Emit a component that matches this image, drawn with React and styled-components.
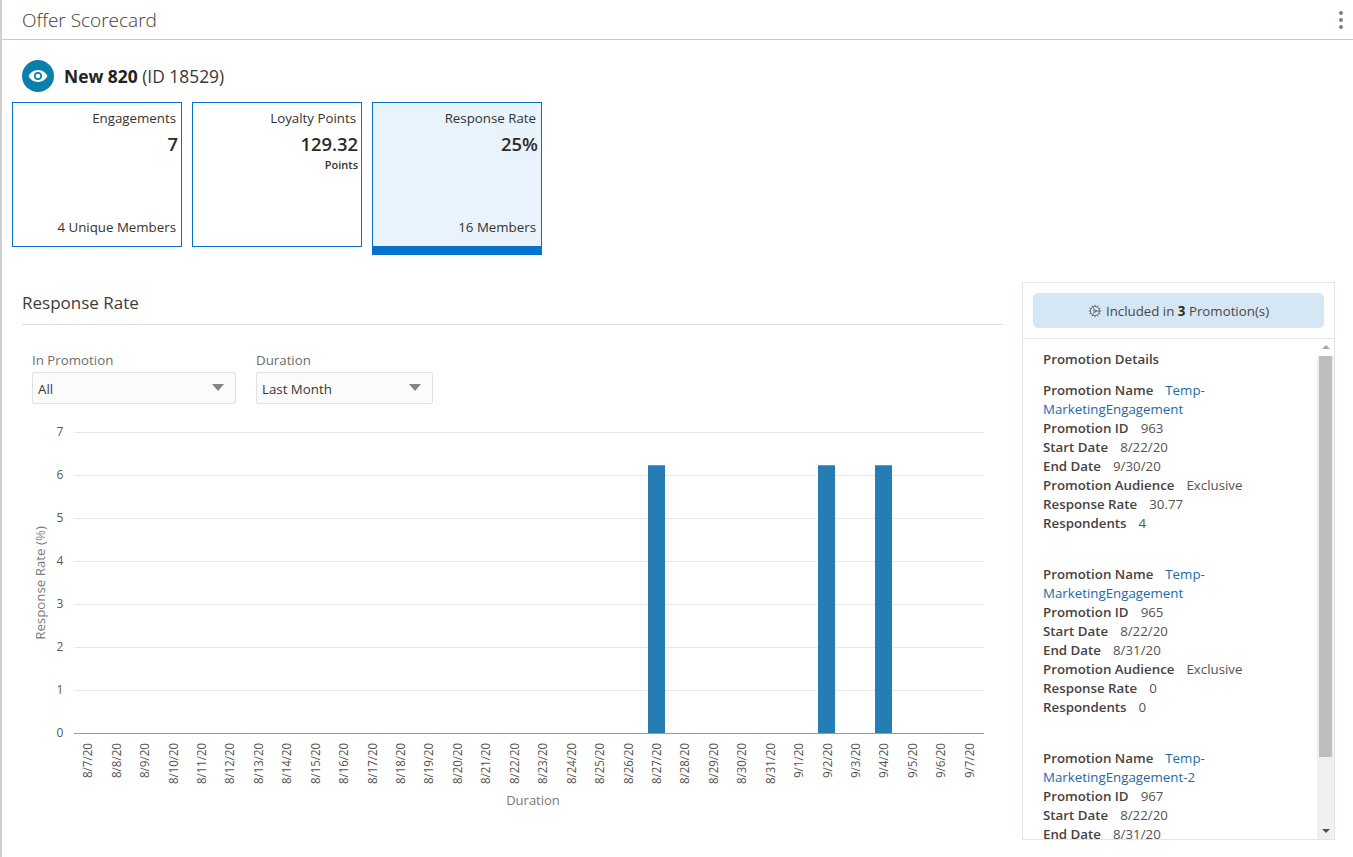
import React from "react";
import styled, { createGlobalStyle } from "styled-components";
import { Cog } from "lucide-react";

const Global = createGlobalStyle`
  html, body { margin: 0; padding: 0; background: #fff; }
  body { font-family: "Open Sans", "Noto Sans", "Liberation Sans", sans-serif; color: #2c2a28; overflow: hidden; }
  * { box-sizing: border-box; }
`;

const Page = styled.div`
  width: 1353px; height: 857px; border-left: 2px solid #cfcfcf; background: #fff; overflow: hidden;
`;
const Header = styled.header`
  height: 40px; border-bottom: 1px solid #c9c9c9; display: flex; align-items: center; justify-content: space-between;
  padding: 0 10px 0 20px;
`;
const Title = styled.h1`
  margin: 0; font-size: 19px; font-weight: 300; color: #3f3b38; line-height: 40px;
`;
const Kebab = styled.div`
  display: flex; flex-direction: column; gap: 3px;
`;
const Dot = styled.span`
  width: 4px; height: 4px; border-radius: 50%; background: #7b8087;
`;
const Identity = styled.div`
  display: flex; align-items: center; gap: 10px; padding: 10px 0 0 20px; height: 62px;
`;
const EyeBadge = styled.div`
  width: 32px; height: 32px; border-radius: 50%; background: #0a7fac; display: flex; align-items: center; justify-content: center;
`;
const Name = styled.div`
  font-size: 17.4px; color: #3a3735; font-weight: 400; b { font-weight: 700; color: #252321; }
`;
const Cards = styled.div`
  display: flex; gap: 10px; padding-left: 10px; height: 153px; align-items: flex-start;
`;
const Card = styled.div`
  width: 170px; height: ${p => (p.$active ? 153 : 145)}px; display: flex; flex-direction: column; align-items: flex-end;
  border: 1px solid #0572ce; border-bottom: ${p => (p.$active ? "9px solid #0572ce" : "1px solid #0572ce")};
  background: ${p => (p.$active ? "#e8f3fb" : "#fff")}; padding: 6px 5px 9px 5px;
`;
const CardLabel = styled.div`
  font-size: 13.3px; line-height: 19px; color: #35322f;
`;
const CardValue = styled.div`
  font-size: 18.4px; line-height: 26px; font-weight: 600; color: #2c2a28; margin-right: -2px; margin-top: 3px;
`;
const CardUnit = styled.div`
  font-size: 11px; line-height: 14px; font-weight: 600; color: #35322f; margin-right: -2px; margin-top: 1px;
`;
const CardFoot = styled.div`
  margin-top: auto; font-size: 13.3px; line-height: 19px; color: #35322f;
`;
const Body = styled.div`
  display: flex; align-items: flex-start; padding-left: 20px; margin-top: 27px;
`;
const Main = styled.section`
  width: 981px; padding-top: 8px;
`;
const SectionTitle = styled.h2`
  margin: 0; font-size: 17px; font-weight: 400; color: #3f3b38; height: 35px; line-height: 26px; border-bottom: 1px solid #dfdfdf;
`;
const Filters = styled.div`
  display: flex; gap: 20px; padding: 25px 0 0 10px;
`;
const Field = styled.div`
  width: ${p => p.$w}px;
`;
const FieldLabel = styled.div`
  font-size: 13.3px; line-height: 20px; color: #6f6c69; height: 22px;
`;
const Select = styled.div`
  height: 32px; border: 1px solid #e2e2e2; border-radius: 2px; background: #fbfbfb; display: flex; align-items: center;
  justify-content: space-between; padding: 2px 11px 0 5px; font-size: 13.3px; color: #3a3735;
`;
const Caret = styled.span`
  width: 0; height: 0; border-left: 6px solid transparent; border-right: 6px solid transparent; border-top: 7px solid #87837f;
  margin-top: -4px;
`;
const ChartSvg = styled.svg`
  display: block; margin-left: -22px; margin-top: 12px;
  text { font-family: "Open Sans", "Noto Sans", sans-serif; }
`;
const Side = styled.aside`
  width: 313px; height: 558px; margin-left: 19px; border: 1px solid #e1e4e8; display: flex; flex-direction: column; background: #fff;
`;
const SideHead = styled.div`
  height: 56px; flex: none; padding: 10px 10px 0; border-bottom: 1px solid #dfe5ea;
`;
const Pill = styled.div`
  height: 35px; border-radius: 5px; background: #d5e7f4; display: flex; align-items: center; justify-content: center; gap: 4px;
  font-size: 13.3px; color: #4a4744; b { font-weight: 700; color: #2c2a28; }
`;
const SideBody = styled.div`
  flex: 1; display: flex; min-height: 0;
`;
const Scroller = styled.div`
  flex: 1; overflow: hidden; padding: 11px 20px 0 20px; font-size: 13.3px; line-height: 19px;
`;
const DetailsTitle = styled.div`
  font-weight: 600; color: #45423f; margin-bottom: 12px;
`;
const Promo = styled.div`
  margin-bottom: 32px;
`;
const Key = styled.span`
  font-weight: 600; color: #45423f; margin-right: 12px;
`;
const Val = styled.span`
  color: #55524f;
`;
const PromoLink = styled.span`
  color: #1d6aa8;
`;
const Track = styled.div`
  width: 17px; flex: none; background: #f0f0f0; display: flex; flex-direction: column; align-items: center; position: relative;
  &::before { content: ""; position: absolute; left: 0; right: 0; top: 0; height: 17px; background: #fff; }
`;
const ArrowUp = styled.span`
  position: relative; margin-top: 6px; width: 0; height: 0; border-left: 4px solid transparent; border-right: 4px solid transparent; border-bottom: 4px solid #a8a8a8;
`;
const ArrowDown = styled.span`
  margin-top: auto; margin-bottom: 6px; width: 0; height: 0; border-left: 4px solid transparent; border-right: 4px solid transparent; border-top: 4px solid #505050;
`;
const Thumb = styled.div`
  width: 13px; height: 401px; background: #bebebe; margin-top: 7px; position: relative;
`;

const dates = [];
for (let d = 7; d <= 31; d++) dates.push(`8/${d}/20`);
for (let d = 1; d <= 7; d++) dates.push(`9/${d}/20`);
const promos = [
  { name: ["Temp-", "MarketingEngagement"], id: 963, start: "8/22/20", end: "9/30/20", aud: "Exclusive", rate: "30.77", resp: 4 },
  { name: ["Temp-", "MarketingEngagement"], id: 965, start: "8/22/20", end: "8/31/20", aud: "Exclusive", rate: "0", resp: 0 },
  { name: ["Temp-", "MarketingEngagement-2"], id: 967, start: "8/22/20", end: "8/31/20", aud: "Exclusive", rate: "0", resp: 0 },
];

const Row = ({ k, children }) => (
  <div><Key>{k}</Key><Val>{children}</Val></div>
);

function Chart() {
  const X0 = 74, X1 = 984;
  const W = (X1 - X0) / 32;
  const yOf = v => 16 + (7 - v) * 43;
  return (
    <ChartSvg width="1004" height="420" viewBox="0 0 1004 420">
      {[7, 6, 5, 4, 3, 2, 1].map(v => (
        <line key={v} x1={X0} x2={X1} y1={yOf(v) + 0.5} y2={yOf(v) + 0.5} stroke="#e8e8e8" />
      ))}
      {[20, 26, 28].map(i => (
        <rect key={i} x={Math.round(X0 + i * W + 5)} y={yOf(6.25) + 1} width="17" height={yOf(0) - yOf(6.25)} fill="#267db3" />
      ))}
      <line x1={X0} x2={X1} y1={yOf(0) + 0.5} y2={yOf(0) + 0.5} stroke="#9a9a9a" />
      {[7, 6, 5, 4, 3, 2, 1, 0].map(v => (
        <text key={v} x="60" y={yOf(v) + 4} fontSize="12" fill="#5a5754" textAnchor="middle">{v}</text>
      ))}
      {dates.map((d, i) => {
        const x = X0 + (i + 0.5) * W;
        return (
          <text key={d} transform={`translate(${x + 4} 327) rotate(-90)`} fontSize="12" fill="#55524f" textAnchor="end" textLength={d.length > 6 ? 41 : 35} lengthAdjust="spacingAndGlyphs">{d}</text>
        );
      })}
      <text transform="translate(45 167) rotate(-90)" fontSize="13.300" fill="#77797c" textAnchor="middle">Response Rate (%)</text>
      <text x="533" y="389" fontSize="13" fill="#77797c" textAnchor="middle">Duration</text>
    </ChartSvg>
  );
}

export default function App() {
  return (
    <Page>
      <Global />
      <Header>
        <Title>Offer Scorecard</Title>
        <Kebab><Dot /><Dot /><Dot /></Kebab>
      </Header>
      <Identity>
        <EyeBadge>
          <svg width="20" height="14" viewBox="0 0 20 14">
            <path d="M10 1C5.500 1 2 4 .5 7 2 10 5.500 13 10 13s8-3 9.500-6C18 4 14.500 1 10 1z" fill="#fff" />
            <circle cx="10" cy="7" r="4" fill="#0a7fac" />
            <circle cx="10" cy="7" r="2.300" fill="#fff" />
          </svg>
        </EyeBadge>
        <Name><b>New 820</b> (ID 18529)</Name>
      </Identity>
      <Cards>
        <Card>
          <CardLabel>Engagements</CardLabel>
          <CardValue>7</CardValue>
          <CardFoot>4 Unique Members</CardFoot>
        </Card>
        <Card>
          <CardLabel>Loyalty Points</CardLabel>
          <CardValue>129.32</CardValue>
          <CardUnit>Points</CardUnit>
        </Card>
        <Card $active>
          <CardLabel>Response Rate</CardLabel>
          <CardValue>25%</CardValue>
          <CardFoot>16 Members</CardFoot>
        </Card>
      </Cards>
      <Body>
        <Main>
          <SectionTitle>Response Rate</SectionTitle>
          <Filters>
            <Field $w={204}>
              <FieldLabel>In Promotion</FieldLabel>
              <Select>All<Caret /></Select>
            </Field>
            <Field $w={177}>
              <FieldLabel>Duration</FieldLabel>
              <Select>Last Month<Caret /></Select>
            </Field>
          </Filters>
          <Chart />
        </Main>
        <Side>
          <SideHead>
            <Pill>
              <Cog size={14} color="#5f6b73" strokeWidth={1.6} />
              <span>Included in <b>3</b> Promotion(s)</span>
            </Pill>
          </SideHead>
          <SideBody>
            <Scroller>
              <DetailsTitle>Promotion Details</DetailsTitle>
              {promos.map(p => (
                <Promo key={p.id}>
                  <div><Key>Promotion Name</Key><PromoLink>{p.name[0]}<br />{p.name[1]}</PromoLink></div>
                  <Row k="Promotion ID">{p.id}</Row>
                  <Row k="Start Date">{p.start}</Row>
                  <Row k="End Date">{p.end}</Row>
                  <Row k="Promotion Audience">{p.aud}</Row>
                  <Row k="Response Rate">{p.rate}</Row>
                  <Row k="Respondents">{p.resp}</Row>
                </Promo>
              ))}
            </Scroller>
            <Track>
              <ArrowUp />
              <Thumb />
              <ArrowDown />
            </Track>
          </SideBody>
        </Side>
      </Body>
    </Page>
  );
}
